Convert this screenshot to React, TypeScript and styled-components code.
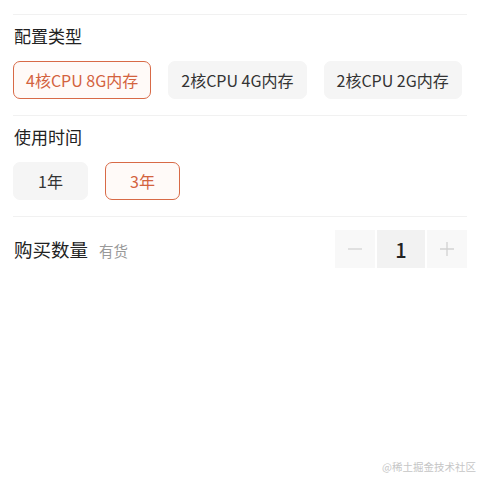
import * as React from 'react';
import styled, { createGlobalStyle } from 'styled-components';

const GlobalStyle = createGlobalStyle`
  html, body {
    margin: 0;
    padding: 0;
    background: #fff;
  }
  body {
    font-family: 'Noto Sans CJK SC', 'Noto Sans', sans-serif;
    color: #222;
  }
`;

const Page = styled.div`
  position: relative;
  width: 480px;
  height: 480px;
  box-sizing: border-box;
  padding: 14px 13px 0 13px;
  overflow: hidden;
`;

const Section = styled.section<{ $last?: boolean }>`
  border-top: 1px solid #f1f1f1;
  padding: ${(p) => (p.$last ? '13px 0 0 0' : '9px 0 16px 0')};
`;

const Heading = styled.h2`
  margin: 0 0 13px 1px;
  font-size: 17px;
  line-height: 24px;
  font-weight: 400;
  color: #222;
`;

const Options = styled.div`
  display: flex;
  gap: 17px;
`;

const Option = styled.button<{ $active?: boolean; $wide?: boolean }>`
  box-sizing: border-box;
  flex-shrink: 0;
  white-space: nowrap;
  height: 38px;
  min-width: ${(p) => (p.$wide ? '0' : '75px')};
  padding: 0 12px;
  border-radius: 7px;
  border: 1.5px solid ${(p) => (p.$active ? '#d86a47' : '#f5f5f5')};
  background: ${(p) => (p.$active ? '#fffaf8' : '#f5f5f5')};
  color: ${(p) => (p.$active ? '#d3623e' : '#333')};
  font-family: inherit;
  font-size: 16px;
  line-height: 1;
  cursor: pointer;
`;

const QtyRow = styled.div`
  display: flex;
  align-items: center;
  justify-content: space-between;
  height: 38px;
  padding-left: 1px;
`;

const QtyLabel = styled.div`
  display: flex;
  align-items: baseline;
  gap: 11px;
`;

const QtyTitle = styled.span`
  font-size: 18.5px;
  color: #222;
`;

const Stock = styled.span`
  font-size: 14.5px;
  color: #999;
`;

const Stepper = styled.div`
  display: flex;
  gap: 2px;
  height: 38px;
`;

const StepButton = styled.button`
  width: 40px;
  height: 38px;
  border: none;
  padding: 0;
  background: #f8f8f8;
  display: flex;
  align-items: center;
  justify-content: center;
  cursor: pointer;
`;

const Count = styled.div`
  width: 48px;
  height: 38px;
  background: #f2f2f2;
  display: flex;
  align-items: center;
  justify-content: center;
  font-size: 20px;
  font-weight: 500;
  color: #222;
`;

const Watermark = styled.div`
  position: absolute;
  right: 4px;
  bottom: 6px;
  font-family: 'Noto Sans CJK SC', 'Liberation Serif', serif;
  font-size: 10.5px;
  color: #c6c6c6;
`;

const MinusIcon = () => (
  <svg width="16" height="16" viewBox="0 0 16 16">
    <path d="M1 8h14" stroke="#d2d2d2" strokeWidth="1.3" />
  </svg>
);

const PlusIcon = () => (
  <svg width="16" height="16" viewBox="0 0 16 16">
    <path d="M1 8h14M8 1v14" stroke="#d2d2d2" strokeWidth="1.3" />
  </svg>
);

const configs = ['4核CPU 8G内存', '2核CPU 4G内存', '2核CPU 2G内存'];
const periods = ['1年', '3年'];

const App: React.FC = () => {
  const [config, setConfig] = React.useState(0);
  const [period, setPeriod] = React.useState(1);
  const [count, setCount] = React.useState(1);

  return (
    <Page>
      <GlobalStyle />
      <Section>
        <Heading>配置类型</Heading>
        <Options>
          {configs.map((c, i) => (
            <Option key={c} $wide $active={i === config} onClick={() => setConfig(i)}>
              {c}
            </Option>
          ))}
        </Options>
      </Section>
      <Section>
        <Heading>使用时间</Heading>
        <Options>
          {periods.map((p, i) => (
            <Option key={p} $active={i === period} onClick={() => setPeriod(i)}>
              {p}
            </Option>
          ))}
        </Options>
      </Section>
      <Section $last>
        <QtyRow>
          <QtyLabel>
            <QtyTitle>购买数量</QtyTitle>
            <Stock>有货</Stock>
          </QtyLabel>
          <Stepper>
            <StepButton onClick={() => setCount(Math.max(1, count - 1))}>
              <MinusIcon />
            </StepButton>
            <Count>{count}</Count>
            <StepButton onClick={() => setCount(count + 1)}>
              <PlusIcon />
            </StepButton>
          </Stepper>
        </QtyRow>
      </Section>
      <Watermark>@稀土掘金技术社区</Watermark>
    </Page>
  );
};

export default App;
